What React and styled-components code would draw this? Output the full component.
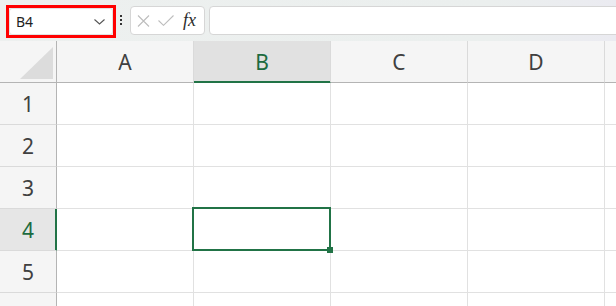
import React from 'react';
import styled, { createGlobalStyle, css } from 'styled-components';

const GREEN = '#217346';

const GlobalStyle = createGlobalStyle`
  body {
    margin: 0;
    background: #ffffff;
    font-family: "Noto Sans", "Open Sans", sans-serif;
    overflow: hidden;
  }
`;

const Page = styled.div`
  width: 616px;
  height: 306px;
  overflow: hidden;
  display: flex;
  flex-direction: column;
`;

const Toolbar = styled.div`
  flex-shrink: 0;
  height: 41px;
  box-sizing: border-box;
  display: flex;
  align-items: flex-start;
  padding: 5px 0 0 6px;
  background: linear-gradient(90deg, #edf0ef 0%, #ebefee 80%, #ebebf1 100%);
`;

const NameBox = styled.div`
  width: 110px;
  height: 33px;
  box-sizing: border-box;
  border: 3px solid #ff0000;
`;

const NameField = styled.div`
  height: 100%;
  box-sizing: border-box;
  background: #ffffff;
  border: 1px solid #e2e2e2;
  border-radius: 3px;
  display: flex;
  align-items: center;
  justify-content: space-between;
  padding: 0 7px 0 6px;
  font-size: 14px;
  color: #1f1f1f;
`;

const Dots = styled.div`
  display: flex;
  flex-direction: column;
  gap: 2px;
  margin: 10px 0 0 4px;

  span {
    width: 2px;
    height: 2px;
    background: #333333;
  }
`;

const FieldBox = styled.div`
  height: 29px;
  box-sizing: border-box;
  margin-top: 1px;
  background: #ffffff;
  border: 1px solid #d6d6d6;
  border-radius: 4px;
`;

const FormulaButtons = styled(FieldBox)`
  width: 75px;
  margin-left: 8px;
  display: flex;
  align-items: center;
  padding-left: 6px;
  gap: 8px;
`;

const Fx = styled.span`
  font-family: "Liberation Serif", "DejaVu Serif", serif;
  font-style: italic;
  font-size: 18px;
  color: #2b2b2b;
  margin-left: 1px;
  line-height: 1;
  margin-top: -2px;
`;

const FormulaInput = styled(FieldBox)`
  flex: 1;
  margin-left: 4px;
  margin-right: -10px;
`;

const Sheet = styled.div`
  flex-shrink: 0;
  display: grid;
  grid-template-columns: 57px repeat(5, 137px);
  grid-auto-rows: 42px;
`;

const headerBase = css`
  box-sizing: border-box;
  display: flex;
  align-items: center;
  justify-content: center;
  font-size: 21px;
`;

const Corner = styled.div`
  position: relative;
  background: #f5f5f5;
  border-right: 1px solid #b4b4b4;
  border-bottom: 1px solid #b4b4b4;

  &::after {
    content: '';
    position: absolute;
    left: 20px;
    top: 6px;
    width: 33px;
    height: 32px;
    background: #dcdcdc;
    clip-path: polygon(100% 0, 100% 100%, 0 100%);
  }
`;

const ColHeader = styled.div`
  ${headerBase};
  background: ${(p) => (p.$active ? '#e1e1e1' : '#f5f5f5')};
  color: ${(p) => (p.$active ? '#1d6b40' : '#404040')};
  border-right: 1px solid #dadada;
  border-bottom: 1px solid ${(p) => (p.$active ? GREEN : '#b4b4b4')};
  box-shadow: ${(p) => (p.$active ? `inset 0 -1px 0 ${GREEN}` : 'none')};
`;

const RowHeader = styled.div`
  ${headerBase};
  background: ${(p) => (p.$active ? '#e6e6e6' : '#f5f5f5')};
  color: ${(p) => (p.$active ? '#1d6b40' : '#404040')};
  border-bottom: 1px solid #dadada;
  border-right: 1px solid ${(p) => (p.$active ? GREEN : '#b4b4b4')};
  box-shadow: ${(p) => (p.$active ? `inset -1px 0 0 ${GREEN}` : 'none')};
`;

const Cell = styled.div`
  position: ${(p) => (p.$selected ? 'relative' : 'static')};
  box-sizing: border-box;
  background: #ffffff;
  border-right: 1px solid #e1e1e1;
  border-bottom: 1px solid #e1e1e1;
`;

const Selection = styled.div`
  position: absolute;
  top: -2px;
  left: -2px;
  right: -1px;
  bottom: -1px;
  border: 2px solid ${GREEN};
  z-index: 2;
`;

const FillHandle = styled.div`
  position: absolute;
  right: -4px;
  bottom: -4px;
  width: 6px;
  height: 6px;
  background: ${GREEN};
`;

const Chevron = () => (
  <svg width="11" height="6" viewBox="0 0 11 6" fill="none">
    <path d="M0.5 0.5 L5.5 5 L10.5 0.5" stroke="#555" strokeWidth="1.1" />
  </svg>
);

const CancelIcon = () => (
  <svg width="13" height="12" viewBox="0 0 13 12" fill="none">
    <path d="M1 0.5 L12 11.5 M12 0.5 L1 11.5" stroke="#bdbdbd" strokeWidth="1.1" />
  </svg>
);

const CheckIcon = () => (
  <svg width="16" height="11" viewBox="0 0 16 11" fill="none">
    <path d="M0.5 5.5 L5.5 10.3 L15.5 0.5" stroke="#bdbdbd" strokeWidth="1.1" />
  </svg>
);

// the fifth column and sixth row are only partly in view, so they carry no label
const columns = ['A', 'B', 'C', 'D', ''];
const rows = ['1', '2', '3', '4', '5', ''];
const active = { col: 'B', row: '4' };

const App = () => {
  return (
    <Page>
      <GlobalStyle />
      <Toolbar>
        <NameBox>
          <NameField>
            <span>B4</span>
            <Chevron />
          </NameField>
        </NameBox>
        <Dots>
          <span />
          <span />
          <span />
        </Dots>
        <FormulaButtons>
          <CancelIcon />
          <CheckIcon />
          <Fx>fx</Fx>
        </FormulaButtons>
        <FormulaInput />
      </Toolbar>
      <Sheet>
        <Corner />
        {columns.map((c, ci) => (
          <ColHeader key={ci} $active={c === active.col}>
            {c}
          </ColHeader>
        ))}
        {rows.map((r, ri) => (
          <React.Fragment key={ri}>
            <RowHeader $active={r === active.row}>{r}</RowHeader>
            {columns.map((c, ci) => {
              const selected = c === active.col && r === active.row;
              return (
                <Cell key={ci} $selected={selected}>
                  {selected && (
                    <Selection>
                      <FillHandle />
                    </Selection>
                  )}
                </Cell>
              );
            })}
          </React.Fragment>
        ))}
      </Sheet>
    </Page>
  );
};

export default App;
